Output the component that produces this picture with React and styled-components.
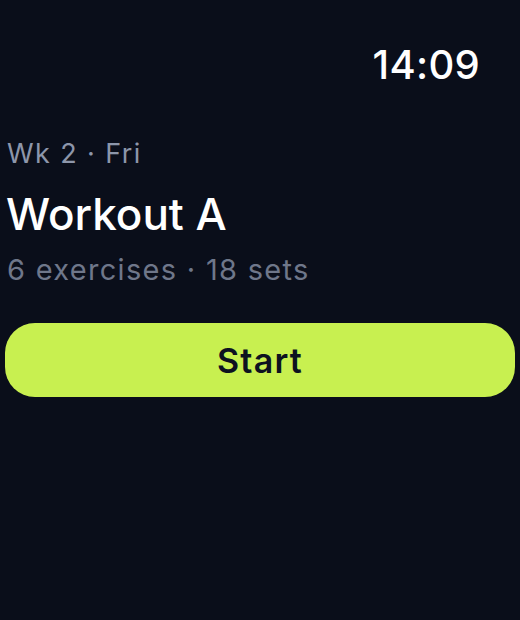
import React from "react";
import styled, { createGlobalStyle } from "styled-components";

const GlobalStyle = createGlobalStyle`
  html, body {
    margin: 0;
    padding: 0;
    background: #0a0e1a;
  }
  body {
    font-family: Inter, "Noto Sans", sans-serif;
  }
`;

function App() {
  return (
    <Screen>
      <GlobalStyle />
      <StatusBar>
        <Clock>14:09</Clock>
      </StatusBar>
      <Content>
        <Week>Wk 2 · Fri</Week>
        <Title>Workout A</Title>
        <Summary>6 exercises · 18 sets</Summary>
        <StartButton>Start</StartButton>
      </Content>
    </Screen>
  );
}

export default App;

const Screen = styled.div`
  width: 520px;
  height: 620px;
  background: #0a0e1a;
  display: flex;
  flex-direction: column;
  box-sizing: border-box;
  padding: 0 5px;
`;

const StatusBar = styled.div`
  display: flex;
  justify-content: flex-end;
  padding: 39px 35px 0 0;
`;

const Clock = styled.div`
  color: #ffffff;
  font-size: 40px;
  font-weight: 500;
  line-height: 52px;
  letter-spacing: 0.3px;
`;

const Content = styled.div`
  display: flex;
  flex-direction: column;
  padding-top: 45px;
`;

const Week = styled.div`
  color: #8d96aa;
  font-size: 27px;
  line-height: 36px;
  letter-spacing: 1.4px;
  padding-left: 2px;
`;

const Title = styled.h1`
  margin: 16px 0 0;
  color: #ffffff;
  font-size: 44px;
  font-weight: 500;
  line-height: 52px;
  padding-left: 1px;
`;

const Summary = styled.div`
  margin-top: 12px;
  color: #6f778a;
  font-size: 29px;
  line-height: 36px;
  letter-spacing: 1.3px;
  padding-left: 2px;
`;

const StartButton = styled.button`
  margin-top: 35px;
  height: 74px;
  width: 100%;
  border: none;
  border-radius: 30px;
  background: #c8f050;
  color: #0d1220;
  font-family: Inter, "Noto Sans", sans-serif;
  font-size: 34px;
  font-weight: 600;
  letter-spacing: 1.2px;
  cursor: pointer;
`;
